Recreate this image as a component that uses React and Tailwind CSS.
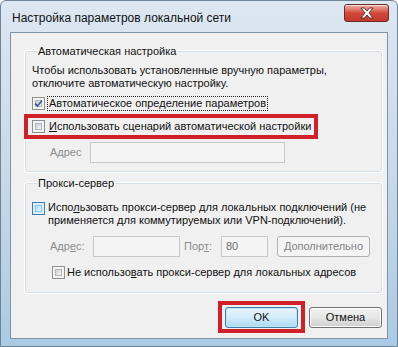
import React from "react";

const font = { fontFamily: '"Liberation Sans", Arial, sans-serif' };

function CheckBox({ checked = false, hover = false }) {
  return (
    <div
      className={`w-[13px] h-[13px] shrink-0 border p-[2px] ${
        hover ? "border-[#3c7fb1] bg-[#deedf8]" : "border-[#8e8f8f] bg-[#f4f4f4]"
      }`}
    >
      <div
        className={`w-full h-full flex items-center justify-center ${
          hover
            ? "bg-gradient-to-br from-[#b1dcf7] to-[#e9f6fd] border border-[#79c6f9]"
            : "bg-gradient-to-br from-[#cbcfd5] to-[#f6f6f6] border border-[#b1b4b8]"
        }`}
      >
        {checked && (
          <svg width="9" height="9" viewBox="0 0 9 9" className="shrink-0">
            <path d="M1 4.5 L3.5 7 L8 1.5" fill="none" stroke="#4a5f97" strokeWidth="1.8" />
          </svg>
        )}
      </div>
    </div>
  );
}

function TextBox({ className = "", children }) {
  return (
    <div
      className={`h-[21px] border border-[#c6c9cc] bg-[#f4f4f4] flex items-center px-[4px] text-[#6d6d6d] ${className}`}
    >
      {children}
    </div>
  );
}

function CloseButton() {
  return (
    <div className="ml-auto mr-[8px] self-start mt-[3px] w-[45px] h-[18px] rounded-[3px] border border-[#6e2a23] bg-gradient-to-b from-[#eab2a7] via-[#d2493b] to-[#c23a2c] flex items-center justify-center shadow-[inset_0_1px_0_rgba(255,255,255,0.6)]">
      <svg width="16" height="12" viewBox="0 0 16 12">
        <path
          d="M2 1 H5.5 L8 4 L10.5 1 H14 L10 6 L14 11 H10.5 L8 8 L5.5 11 H2 L6 6 Z"
          fill="#ffffff"
          stroke="#5b2620"
          strokeWidth="0.9"
          strokeLinejoin="round"
        />
      </svg>
    </div>
  );
}

export default function App() {
  return (
    <div
      className="w-[398px] h-[347px] overflow-hidden flex flex-col rounded-t-[6px] border border-[#6f8397] bg-gradient-to-b from-[#dce7f2] via-[#c9d9e8] to-[#a9cbe4] text-[11px] leading-[13px] text-[#111] whitespace-nowrap"
      style={font}
    >
      {/* Title bar */}
      <div className="h-[31px] flex items-center pl-[11px] shrink-0">
        <span className="text-[12px] text-[#111] mt-[4px]">Настройка параметров локальной сети</span>
        <CloseButton />
      </div>

      {/* Client area */}
      <div className="mx-[9px] h-[307px] border border-[#7f92a6] bg-[#f0f0f0] flex flex-col pl-[14px] pr-[5px]">
        {/* Автоматическая настройка */}
        <fieldset className="mt-[11px] border border-[#d5dfe5] rounded-[3px] shadow-[0_0_0_1px_#ffffff] pl-[6px] pr-[6px] pb-[8px]">
          <legend className="ml-[5px] px-[1px] leading-[15px]">Автоматическая настройка</legend>
          <div className="mt-[5px]">
            <div>Чтобы использовать установленные вручную параметры,</div>
            <div>отключите автоматическую настройку.</div>
          </div>
          <div className="flex items-center mt-[6px] h-[15px]">
            <CheckBox checked />
            <span className="ml-[2px] px-[1px] border border-dotted border-[#222] leading-[13px]">
              Автоматическое определение параметров
            </span>
          </div>
          <div className="-ml-[8px] mt-[3px] w-[294px] h-[25px] border-[4px] border-[#d0202a] flex items-center pl-[4px]">
            <CheckBox />
            <span className="ml-[4px]">
              <span className="underline">И</span>спользовать сценарий автоматической настройки
            </span>
          </div>
          <div className="flex items-center mt-[3px]">
            <span className="ml-[18px] w-[40px] text-[#8d8d8d]">Адрес</span>
            <TextBox className="w-[195px]" />
          </div>
        </fieldset>

        {/* Прокси-сервер */}
        <fieldset className="mt-[4px] border border-[#d5dfe5] rounded-[3px] shadow-[0_0_0_1px_#ffffff] pl-[6px] pr-[6px] pb-[13px]">
          <legend className="ml-[5px] px-[1px] leading-[15px]">Прокси-сервер</legend>
          <div className="flex items-start mt-[10px]">
            <div className="mt-[1px]">
              <CheckBox hover />
            </div>
            <div className="ml-[3px]">
              <div>
                Испо<span className="underline">л</span>ьзовать прокси-сервер для локальных подключений (не
              </div>
              <div>применяется для коммутируемых или VPN-подключений).</div>
            </div>
          </div>
          <div className="flex items-center mt-[9px] text-[#8d8d8d]">
            <span className="ml-[18px] w-[43px]">
              Адр<span className="underline">е</span>с:
            </span>
            <TextBox className="w-[87px]" />
            <span className="ml-[4px] w-[37px]">
              Пор<span className="underline">т</span>:
            </span>
            <TextBox className="w-[47px]">80</TextBox>
            <div className="ml-[9px] w-[93px] h-[21px] rounded-[3px] border border-[#adb2b5] bg-[#f4f4f4] flex items-center justify-center text-[#838383]">
              <span className="underline">Д</span>ополнительно
            </div>
          </div>
          <div className="flex items-center mt-[9px] ml-[20px]">
            <CheckBox />
            <span className="ml-[2px]">
              Не использо<span className="underline">в</span>ать прокси-сервер для локальных адресов
            </span>
          </div>
        </fieldset>

        {/* Buttons */}
        <div className="flex items-center mt-[8px]">
          <div className="ml-auto w-[87px] h-[32px] border-[4px] border-[#d0202a] flex items-center justify-center">
            <div className="w-[73px] h-[21px] rounded-[3px] border border-[#3c7fb1] bg-gradient-to-b from-[#eaf6fd] via-[#d3ecfa] to-[#a9daf4] shadow-[inset_0_0_0_1px_#bde6fd] flex items-center justify-center">
              OK
            </div>
          </div>
          <div className="ml-[4px] w-[73px] h-[21px] rounded-[3px] border border-[#707070] bg-gradient-to-b from-[#f2f2f2] via-[#e6e6e6] to-[#cfcfcf] shadow-[inset_0_0_0_1px_#fcfcfc] flex items-center justify-center">
            Отмена
          </div>
        </div>
      </div>
    </div>
  );
}
